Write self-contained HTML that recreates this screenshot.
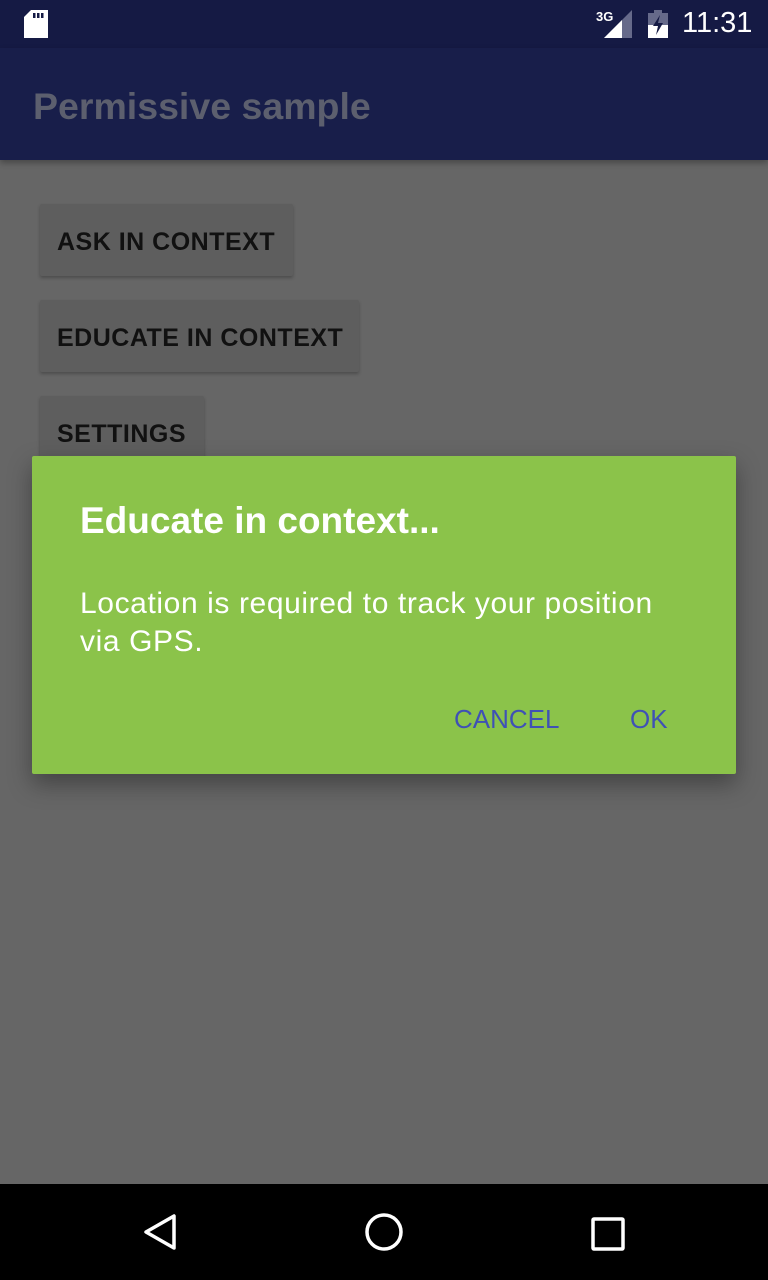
<!DOCTYPE html>
<html><head><style>
body{margin:0;width:768px;height:1280px;position:relative;background:#666;font-family:"Liberation Sans",sans-serif;overflow:hidden}
.sb{position:absolute;left:0;top:0;width:768px;height:48px;background:#151a44}
.ab{position:absolute;left:0;top:48px;width:768px;height:112px;background:#181e4a;box-shadow:0 3px 6px rgba(0,0,0,.3)}
.ab span{position:absolute;left:33px;top:37px;font-size:37.5px;font-weight:bold;color:#5c5f6e}
.btn{position:absolute;left:40px;height:72px;background:#5e5e5e;box-shadow:0 2px 3px rgba(0,0,0,.25);border-radius:2px;color:#111;font-size:25px;font-weight:bold;letter-spacing:0.5px;line-height:76px;padding:0 17px;box-sizing:border-box;white-space:nowrap;overflow:hidden}
.dlg{position:absolute;left:32px;top:456px;width:704px;height:318px;background:#8bc34a;border-radius:2px;box-shadow:0 10px 24px rgba(0,0,0,.35);color:#fff}
.nav{position:absolute;left:0;top:1184px;width:768px;height:96px;background:#000}
</style></head><body>
<div class="sb">
<svg style="position:absolute;left:24px;top:10px" width="24" height="28"><path d="M7 0H24V28H0V7Z" fill="#fff"/><rect x="9" y="3" width="2.5" height="5" fill="#151a44"/><rect x="13" y="3" width="2.5" height="5" fill="#151a44"/><rect x="17" y="3" width="2.5" height="5" fill="#151a44"/></svg>
<span style="position:absolute;left:596px;top:9px;color:#fff;font-size:13px;font-weight:bold">3G</span>
<svg style="position:absolute;left:604px;top:10px" width="28" height="28"><path d="M28 0V28H0Z" fill="#666a8a"/><path d="M18 10V28H0Z" fill="#fff"/></svg>
<svg style="position:absolute;left:648px;top:10px" width="20" height="28"><rect x="6" y="0" width="8" height="3" fill="#666a8a"/><rect x="0" y="3" width="20" height="25" fill="#666a8a"/><rect x="0" y="15" width="20" height="13" fill="#fff"/><path d="M12 5 5 16h5l-2 9 7-12h-5z" fill="#151a44"/></svg>
<span style="position:absolute;left:682px;top:7px;color:#fff;font-size:29px">11:31</span>
</div>
<div class="ab"><span>Permissive sample</span></div>
<div class="btn" style="top:204px;width:253px">ASK IN CONTEXT</div>
<div class="btn" style="top:300px;width:319px">EDUCATE IN CONTEXT</div>
<div class="btn" style="top:396px;width:164px">SETTINGS</div>
<div class="dlg">
<div style="position:absolute;left:48px;top:44px;font-size:37px;font-weight:bold">Educate in context...</div>
<div style="position:absolute;left:48px;top:129px;font-size:30px;letter-spacing:0.6px;line-height:38px;width:620px">Location is required to track your position via GPS.</div>
<div style="position:absolute;left:422px;top:248px;font-size:26px;color:#3f51b5">CANCEL</div>
<div style="position:absolute;left:598px;top:248px;font-size:26px;color:#3f51b5">OK</div>
</div>
<div class="nav">
<svg style="position:absolute;left:140px;top:28px" width="40" height="40"><path d="M34 4V36L6 20Z" fill="none" stroke="#fff" stroke-width="3.5" stroke-linejoin="round"/></svg>
<svg style="position:absolute;left:364px;top:28px" width="40" height="40"><circle cx="20" cy="20" r="17" fill="none" stroke="#fff" stroke-width="3.5"/></svg>
<svg style="position:absolute;left:590px;top:32px" width="36" height="36"><rect x="3" y="3" width="30" height="30" fill="none" stroke="#fff" stroke-width="3.5" rx="1"/></svg>
</div>
</body></html>
